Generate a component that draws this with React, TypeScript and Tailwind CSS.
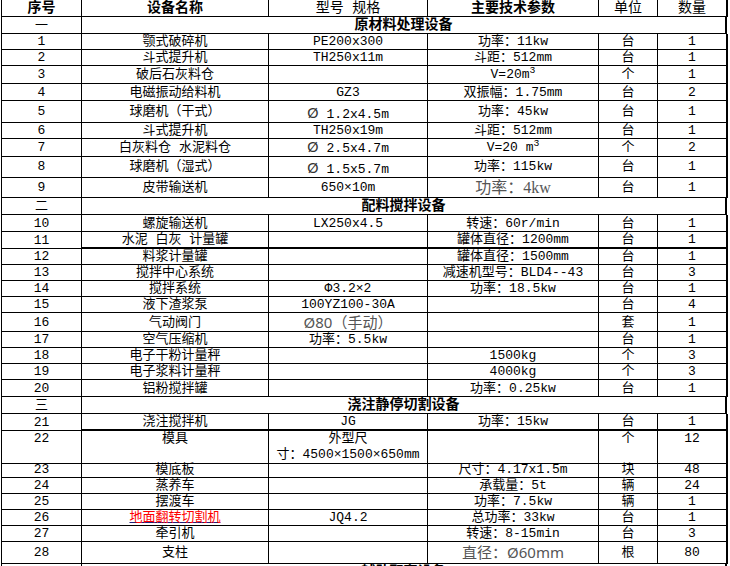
import type { ReactNode } from "react";
import clsx from "clsx";

const grid = "grid grid-cols-[80px_187px_159px_171px_59px_70px]";

function Cell({
  children,
  className,
  last,
  thick,
}: {
  children?: ReactNode;
  className?: string;
  last?: boolean;
  thick?: boolean;
}) {
  return (
    <div
      className={clsx(
        "flex justify-center whitespace-nowrap border-black",
        last ? "border-r-2" : "border-r",
        thick ? "border-b-2" : "border-b",
        className ?? "items-center"
      )}
    >
      {children}
    </div>
  );
}

type RowProps = {
  no: string;
  name: ReactNode;
  model?: ReactNode;
  param?: ReactNode;
  unit: string;
  qty: string;
  h: string;
  thick?: boolean;
  top?: boolean;
};

function Row({ no, name, model, param, unit, qty, h, thick, top }: RowProps) {
  const al = top ? "items-start pt-[1px]" : "items-center";
  return (
    <div className={clsx(grid, h)}>
      <Cell className={al}>{no}</Cell>
      <Cell className={al} thick={thick}>{name}</Cell>
      <Cell className={al} thick={thick}>{model}</Cell>
      <Cell className={al} thick={thick}>{param}</Cell>
      <Cell className={al} thick={thick}>{unit}</Cell>
      <Cell className={al} thick={thick} last>
        {qty}
      </Cell>
    </div>
  );
}

function Section({ no, title, h }: { no: string; title: string; h: string }) {
  return (
    <div className={clsx("grid grid-cols-[80px_645px]", h)}>
      <Cell>{no}</Cell>
      <Cell last className="items-center font-bold text-[14px]">
        {title}
      </Cell>
    </div>
  );
}

const Dia = ({ v, low }: { v: string; low?: boolean }) => (
  <span className={clsx("leading-[15px]", low && "pt-[4px]")}>
    <span className="font-['Noto_Sans',sans-serif] text-[15px] leading-[14px] text-[#333]">Ø</span> {v}
  </span>
);

const Big = ({ children }: { children: ReactNode }) => (
  <span className="font-['Liberation_Serif','Noto_Sans_CJK_SC',serif] text-[16px] text-[#555]">
    {children}
  </span>
);

export default function App() {
  return (
    <div className="min-h-screen overflow-hidden bg-white">
      <div className="ml-px w-[727px] border-l border-black font-['Liberation_Mono','Noto_Sans_CJK_SC',monospace] text-[13px] leading-[15px] text-black">
        <div className={clsx(grid, "h-[17px]")}>
          <Cell className="items-center font-bold text-[14px]">序号</Cell>
          <Cell className="items-center font-bold text-[14px]">设备名称</Cell>
          <Cell className="items-center text-[14px]">型号 规格</Cell>
          <Cell className="items-center font-bold text-[14px]">主要技术参数</Cell>
          <Cell className="items-center text-[14px]">单位</Cell>
          <Cell className="items-center text-[14px]" last>
            数量
          </Cell>
        </div>

        <Section no="一" title="原材料处理设备" h="h-[17px]" />
        <Row no="1" name="颚式破碎机" model="PE200x300" param="功率：11kw" unit="台" qty="1" h="h-[16px]" />
        <Row no="2" name="斗式提升机" model="TH250x11m" param="斗距：512mm" unit="台" qty="1" h="h-[16px]" />
        <Row
          no="3"
          name="破后石灰料仓"
          param={
            <span>
              V=20m<sup>3</sup>
            </span>
          }
          unit="个"
          qty="1"
          h="h-[18px]"
        />
        <Row no="4" name="电磁振动给料机" model="GZ3" param="双振幅：1.75mm" unit="台" qty="2" h="h-[17px]" />
        <Row no="5" name="球磨机（干式）" model={<Dia v="1.2x4.5m" low />} param="功率：45kw" unit="台" qty="1" h="h-[22px]" />
        <Row no="6" name="斗式提升机" model="TH250x19m" param="斗距：512mm" unit="台" qty="1" h="h-[16px]" />
        <Row
          no="7"
          name="白灰料仓 水泥料仓"
          model={<Dia v="2.5x4.7m" />}
          param={
            <span>
              V=20 m<sup>3</sup>
            </span>
          }
          unit="个"
          qty="2"
          h="h-[17px]"
        />
        <Row no="8" name="球磨机（湿式）" model={<Dia v="1.5x5.7m" low />} param="功率：115kw" unit="台" qty="1" h="h-[22px]" />
        <Row no="9" name="皮带输送机" model="650×10m" param={<Big>功率：4kw</Big>} unit="台" qty="1" h="h-[20px]" />

        <Section no="二" title="配料搅拌设备" h="h-[17px]" />
        <Row no="10" name="螺旋输送机" model="LX250x4.5" param="转速：60r/min" unit="台" qty="1" h="h-[17px]" />
        <Row no="11" name="水泥 白灰 计量罐" param="罐体直径：1200mm" unit="台" qty="1" h="h-[16px]" thick />
        <Row no="12" name="料浆计量罐" param="罐体直径：1500mm" unit="台" qty="1" h="h-[17px]" />
        <Row no="13" name="搅拌中心系统" param="减速机型号：BLD4--43" unit="台" qty="3" h="h-[16px]" />
        <Row no="14" name="搅拌系统" model="Φ3.2×2" param="功率：18.5kw" unit="台" qty="1" h="h-[16px]" />
        <Row no="15" name="液下渣浆泵" model="100YZ100-30A" unit="台" qty="4" h="h-[16px]" />
        <Row
          no="16"
          name="气动阀门"
          model={
            <span className="font-['Noto_Sans','Noto_Sans_CJK_SC',sans-serif] text-[15px] text-[#555]">Ø80（手动）</span>
          }
          unit="套"
          qty="1"
          h="h-[19px]"
        />
        <Row no="17" name="空气压缩机" model="功率：5.5kw" unit="台" qty="1" h="h-[16px]" />
        <Row no="18" name="电子干粉计量秤" param="1500kg" unit="个" qty="3" h="h-[16px]" />
        <Row no="19" name="电子浆料计量秤" param="4000kg" unit="个" qty="3" h="h-[16px]" />
        <Row no="20" name="铝粉搅拌罐" param="功率：0.25kw" unit="台" qty="1" h="h-[17px]" />

        <Section no="三" title="浇注静停切割设备" h="h-[17px]" />
        <Row no="21" name="浇注搅拌机" model="JG" param="功率：15kw" unit="台" qty="1" h="h-[16px]" thick />
        <Row
          no="22"
          name="模具"
          model={
            <span className="text-center leading-[16px]">
              外型尺
              <br />
              寸：4500×1500×650mm
            </span>
          }
          unit="个"
          qty="12"
          h="h-[32px]"
          top
        />
        <Row no="23" name="模底板" param="尺寸：4.17x1.5m" unit="块" qty="48" h="h-[16px]" />
        <Row no="24" name="蒸养车" param="承载量：5t" unit="辆" qty="24" h="h-[16px]" />
        <Row no="25" name="摆渡车" param="功率：7.5kw" unit="辆" qty="1" h="h-[16px]" />
        <Row
          no="26"
          name={<span className="text-[#ff0000] underline decoration-[#1f1f7a]">地面翻转切割机</span>}
          model="JQ4.2"
          param="总功率：33kw"
          unit="台"
          qty="1"
          h="h-[16px]"
        />
        <Row no="27" name="牵引机" param="转速：8-15min" unit="台" qty="3" h="h-[16px]" />
        <Row
          no="28"
          name="支柱"
          param={
            <span className="font-['Noto_Sans','Noto_Sans_CJK_SC',sans-serif] text-[15px] text-[#555]">直径：Ø60mm</span>
          }
          unit="根"
          qty="80"
          h="h-[22px]"
        />
        <Section no="四" title="辅助配套设备" h="h-[17px]" />
      </div>
    </div>
  );
}
